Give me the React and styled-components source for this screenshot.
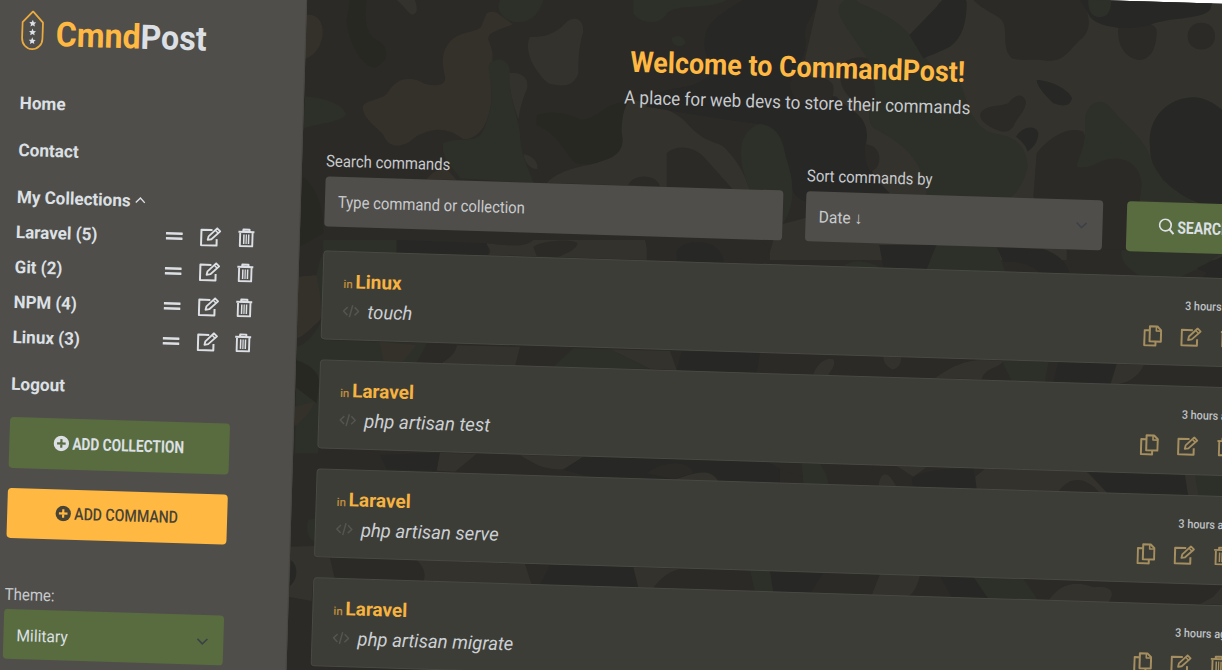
import React, { useLayoutEffect, useRef, useState } from "react";
import styled, { createGlobalStyle } from "styled-components";

const GlobalStyle = createGlobalStyle`
  * { box-sizing: border-box; }
  html, body { margin: 0; padding: 0; overflow: hidden; background: #fff; }
  body { font-family: Roboto, "Liberation Sans", sans-serif; color: #d9dde2; }
`;

const c = {
  panel: "#504e4a",
  card: "#3d3d37",
  cardLine: "#494944",
  green: "#596c40",
  amber: "#ffb942",
  text: "#dce0e5",
  soft: "#c8cbce",
  base: "#2c2a26",
  sand: "#34322c",
  moss: "#2d3029",
  ink: "#272726",
  rust: "#34302a",
};

const Stage = styled.div`
  width: 1222px;
  height: 670px;
  overflow: hidden;
`;

const Page = styled.div`
  position: relative;
  display: flex;
  width: 1324px;
  height: 780px;
  background: ${c.base};
  transform-origin: 0 0;
  transform: translate(-30px, -34.6px) rotate(1.76deg);
`;

const Backdrop = styled.svg`
  position: absolute;
  inset: 0;
  width: 1323px;
  height: 780px;
`;

const Sidebar = styled.aside`
  position: relative;
  flex: 0 0 338px;
  padding: 43px 0 0 53.7px;
  background: ${c.panel};
  border-right: 1px solid #484742;
`;

const Main = styled.main`
  position: relative;
  flex: 1;
  padding: 56px 22px 0 24px;
`;

const FitBox = styled.span`
  display: inline-block;
  flex: none;
  width: ${(p) => p.$w}px;
  white-space: nowrap;
`;
const FitInner = styled.span`
  display: inline-block;
  transform-origin: 0 50%;
`;

function Fit({ w, children }) {
  const ref = useRef(null);
  const [scale, setScale] = useState(1);
  useLayoutEffect(() => {
    if (ref.current) setScale(w / ref.current.offsetWidth);
  }, [w]);
  return (
    <FitBox $w={w}>
      <FitInner ref={ref} style={{ transform: `scaleX(${scale})` }}>{children}</FitInner>
    </FitBox>
  );
}

const Logo = styled.div`
  display: flex;
  height: 40px;
  margin: 0 0 35px -0.5px;
`;
const LogoName = styled.div`
  margin: 3px 0 0 11.5px;
  font-size: 34px;
  line-height: 40px;
  font-weight: 700;
  color: ${c.text};
  b { color: ${c.amber}; font-weight: 700; }
`;

const NavItem = styled.div`
  display: flex;
  align-items: center;
  height: 35px;
  margin-top: ${(p) => (p.$tight ? 0 : 12)}px;
  font-size: 17.5px;
  font-weight: 700;
  color: ${c.text};
  &:first-of-type { margin-top: 0; }
`;
const NavActions = styled.div`
  display: flex;
  align-items: center;
  margin: 0 44.5px 1px auto;
`;
const Caret = styled.svg`margin-left: 4px;`;

const Button = styled.button`
  display: flex;
  align-items: center;
  justify-content: center;
  gap: 3px;
  width: ${(p) => p.$w}px;
  height: ${(p) => p.$h || 50.5}px;
  padding: 0 0 1px 0;
  margin-top: ${(p) => p.$mt || 0}px;
  border: 0;
  border-radius: 4px;
  font: ${(p) => p.$weight || 700} 17px Roboto, sans-serif;
  color: ${(p) => (p.$amber ? "#494335" : c.text)};
  background: ${(p) => (p.$amber ? c.amber : c.green)};
`;

const Label = styled.label`
  display: block;
  height: 24px;
  line-height: 24px;
  margin: ${(p) => p.$mt || 0}px 0 ${(p) => p.$mb || 3.3}px;
  font-size: 16.5px;
  color: ${c.soft};
`;

const Control = styled.div`
  display: flex;
  align-items: center;
  justify-content: space-between;
  width: ${(p) => p.$w}px;
  height: 50px;
  padding: ${(p) => (p.$green ? 3 : 1)}px 15px 0 13px;
  border-radius: 4px;
  font-size: 16.5px;
  color: ${(p) => (p.$green ? c.text : c.soft)};
  background: ${(p) => (p.$green ? c.green : c.panel)};
`;

const Title = styled.h1`
  margin: 0 3px 0 0;
  height: 40px;
  line-height: 40px;
  text-align: center;
  font-size: 29px;
  font-weight: 700;
  color: ${c.amber};
`;
const Subtitle = styled.p`
  margin: 1px 2px 46px 0;
  height: 30px;
  line-height: 30px;
  text-align: center;
  font-size: 18.5px;
  color: ${c.soft};
`;
const Filters = styled.div`
  display: flex;
  align-items: flex-end;
  gap: 23.3px;
  margin-bottom: 24px;
`;
const Cards = styled.div`
  display: flex;
  flex-direction: column;
  gap: 20.7px;
`;
const Card = styled.article`
  display: flex;
  justify-content: space-between;
  width: 938px;
  height: 88.3px;
  padding: 14.5px 21px 0 20px;
  border: 1px solid ${c.cardLine};
  border-radius: 4px;
  background: ${c.card};
`;
const CardSide = styled.div`
  display: flex;
  flex-direction: column;
  align-items: ${(p) => (p.$end ? "flex-end" : "flex-start")};
`;
const CardRow = styled.div`
  display: flex;
  align-items: center;
  height: 29.5px;
`;
const Collection = styled(CardRow)`
  font-size: 19px;
  font-weight: 700;
  color: #f7b340;
  small { margin: 4px 3px 0 0; font-size: 11.5px; font-weight: 500; color: #bf8c3c; }
`;
const Command = styled(CardRow)`
  gap: 8px;
  font-size: 19px;
  font-style: italic;
  color: #ccd0d4;
`;
const Age = styled(CardRow)`
  height: 26px;
  margin-right: -3.5px;
  font-size: 12px;
  font-weight: 500;
  color: #bfc2c6;
`;
const Actions = styled(CardRow)`
  height: 37px;
  gap: 18px;
`;

const EditIcon = ({ color, ...r }) => (
  <svg width="22" height="20" viewBox="0 0 22 20" fill="none" stroke={color} strokeWidth="2" strokeLinejoin="round" {...r}>
    <path d="M12.5 3H1.5V18.5H17V12" />
    <path d="M8 13L8.8 9.5L17.2 1.2L20.3 4.2L11.7 12.3Z" strokeWidth="1.8" />
    <path d="M15.4 3.2L18.4 6.1" strokeWidth="1.5" />
  </svg>
);
const TrashIcon = ({ color, ...r }) => (
  <svg width="17" height="20" viewBox="0 0 17 20" fill="none" stroke={color} strokeWidth="1.9" {...r}>
    <path d="M.5 4H16.5M2.3 4V18.2H14.7V4M5.4 4V1.6H11.6V4" strokeLinejoin="round" />
    <path d="M6.1 6.5V16M10.9 6.5V16" strokeWidth="1.5" />
    <path d="M8.5 6.5V16" strokeWidth="1.2" />
  </svg>
);
const CopyIcon = ({ color }) => (
  <svg width="19" height="22" viewBox="0 0 19 22" fill="none" stroke={color} strokeWidth="2" strokeLinejoin="round">
    <path d="M6.5 1.5H14L17.8 5.2V16.5H6.5Z" />
    <path d="M13 1.5V6H17.8" strokeWidth="1.6" />
    <path d="M6.5 5.5H1.3V20.5H12.5V16.5" />
  </svg>
);
const EqualsIcon = () => (
  <svg width="17" height="9" viewBox="0 0 17 9" fill={c.text}>
    <rect y=".4" width="17" height="2.6" rx=".6" />
    <rect y="5.4" width="17" height="2.6" rx=".6" />
  </svg>
);
const PlusIcon = ({ color, hole }) => (
  <svg width="16" height="16" viewBox="0 0 16 16">
    <circle cx="8" cy="8" r="7.7" fill={color} />
    <path d="M8 3.7V12.3M3.7 8H12.3" stroke={hole} strokeWidth="2.2" />
  </svg>
);
const SearchIcon = () => (
  <svg width="16" height="17" viewBox="0 0 16 17" fill="none" stroke={c.text} strokeWidth="1.7">
    <circle cx="6.8" cy="6.8" r="5.8" />
    <path d="M11 11L15.2 15.6" strokeWidth="2.1" />
  </svg>
);
const Chevron = () => (
  <svg width="12" height="8" viewBox="0 0 12 8" fill="none" stroke="#3b4147" strokeWidth="1.6">
    <path d="M1 1L6 6L11 1" />
  </svg>
);
const star = "M0-3.6L1-1.2L3.5-1L1.7.7L2.2 3.1L0 1.8L-2.2 3.1L-1.7.7L-3.5-1L-1-1.2Z";
const Shield = () => (
  <svg width="23" height="40" viewBox="0 0 23 40">
    <path d="M11.5 1L21.7 12V28A10.2 10.8 0 0 1 1.3 28V12Z" fill="none" stroke="#e9aa40" strokeWidth="1.8" strokeLinejoin="round" />
    {[13, 21.8, 30.6].map((y) => (
      <path key={y} d={star} transform={`translate(11.5 ${y})`} fill={c.text} />
    ))}
  </svg>
);

const camo = [
  { x: 760, y: 0, shapes: [["sand", "M175 0H1386V780H0V690L340 600L130 200Z"]] },
  {
    x: 300, y: 0,
    shapes: [
      ["rust", "M20 45C50 40 70 65 68 100C66 140 45 165 15 178Z"],
      ["dark", "M150 0H200C190 80 205 110 240 125C270 150 265 185 225 203C180 200 140 110 140 60Z"],
      ["sand", "M290 0H345C355 30 350 45 335 44C320 35 315 20 290 0Z"],
      ["rust", "M560 40C590 25 600 50 640 72C600 90 560 95 565 120C590 170 570 200 575 260C580 330 555 420 490 418C430 370 370 390 330 425C290 445 265 440 250 405C230 380 180 350 190 315C210 295 250 300 265 275C290 235 330 225 370 250C400 260 440 260 435 230C425 190 425 150 450 125C480 90 540 100 545 75Z"],
      ["moss", "M600 0H730C720 40 690 70 650 66C610 65 585 30 600 0Z"],
      ["sand", "M690 110C740 115 780 90 800 65C830 45 850 60 850 95C835 140 835 190 835 220C820 265 780 260 745 250C700 210 670 150 690 110Z"],
      ["moss", "M570 190C600 165 630 185 630 220C625 290 650 330 660 400C660 470 690 510 700 550L480 535C470 510 420 480 430 430C470 410 530 430 545 400C585 320 575 270 565 200Z"],
      ["sand", "M628 220C670 215 690 240 680 270C665 300 660 330 655 358C640 310 628 280 628 220Z"],
      ["sand", "M670 463C700 465 715 490 712 507C690 507 675 490 670 463Z"],
      ["rust", "M380 538C400 510 430 500 445 512L470 540Z"],
      ["moss", "M15 290C60 290 130 310 138 342C130 365 60 370 10 385Z"],
      ["dark", "M8 530C50 560 70 620 70 700L0 740Z"],
      ["dark", "M710 345C760 330 800 340 840 358C890 360 900 320 960 308C1000 290 970 350 968 440C940 490 860 500 825 488C790 450 770 400 710 375Z"],
      ["sand", "M1000 300C1060 310 1130 330 1170 380C1230 440 1260 420 1280 450C1320 490 1340 540 1350 570L740 548C790 500 860 500 900 485C960 470 975 440 965 400C965 350 975 300 1000 300Z"],
      ["base", "M1100 460C1130 430 1190 440 1220 480L1300 570L1100 560Z"],
      ["base", "M985 555C1000 520 1070 520 1080 560Z"],
      ["ink", "M1330 0H1550C1560 30 1510 60 1515 110C1530 170 1470 210 1470 260C1500 330 1560 280 1610 290C1640 330 1710 340 1700 420C1690 470 1700 510 1770 580L1520 605C1440 590 1440 380 1380 372C1280 360 1100 330 1040 320C1040 260 1160 270 1190 250C1270 220 1200 170 1215 110C1220 70 1260 40 1330 0Z"],
      ["moss", "M1000 0H1280C1230 30 1130 10 1100 40C1080 80 1020 70 1000 40Z"],
      ["moss", "M1115 115C1130 100 1155 110 1157 130C1145 145 1115 140 1115 115Z"],
      ["moss", "M1380 372C1440 380 1450 430 1460 480C1490 560 1480 640 1440 680L1350 570C1310 480 1310 390 1380 372Z"],
    ],
  },
  {
    x: 760, y: 0,
    shapes: [
      ["moss", "M235 30C240 0 270-20 300 10C370 40 410 60 450 105C500 180 520 220 600 245C630 330 640 380 700 400C780 410 800 450 803 500C790 560 760 590 750 592L500 585C490 480 430 430 340 385C310 350 340 300 345 240C340 170 240 80 235 30Z"],
      ["base", "M240 200C260 170 320 165 325 180C340 230 350 260 345 320C300 320 230 290 240 200Z"],
      ["base", "M90 250C90 220 215 220 220 260C225 300 200 325 160 322C120 315 90 290 90 250Z"],
      ["base", "M314 432C345 435 360 455 358 480C355 500 345 512 330 514C315 490 314 460 314 432Z"],
      ["ink", "M530 20C560-30 620-20 620 10C620 80 600 120 570 140C530 160 500 170 490 175L448 105Z"],
      ["base", "M640 0H960C1000 50 990 100 960 120C920 160 910 185 860 182C820 175 790 185 755 175C720 140 750 80 720 55C700 40 670 30 640 0Z"],
      ["base", "M1075 85C1080 60 1185 60 1190 90C1190 150 1170 180 1135 180C1100 175 1070 140 1075 85Z"],
      ["ink", "M960 0H1360L1350 30C1320 60 1230 50 1170 75C1100 95 1010 80 990 50Z"],
      ["moss", "M985 0H1053C1055 35 1040 52 1018 52C995 50 982 30 985 0Z"],
      ["base", "M1283 108C1283 55 1365 55 1365 108C1365 162 1283 162 1283 108Z"],
      ["ink", "M830 240C870 240 930 270 936 295C930 320 910 320 880 310C860 290 830 260 830 240Z"],
      ["base", "M670 330C690 315 720 320 745 310C765 280 790 280 798 305C795 340 770 350 760 380C740 405 720 395 690 380C655 360 655 340 670 330Z"],
      ["ink", "M768 410C790 375 830 375 835 400C835 430 815 445 803 455C795 430 780 420 768 410Z"],
      ["base", "M830 460C860 420 920 375 970 395C1000 480 1010 480 1070 475C1130 480 1160 520 1145 560L1140 600L1160 780H920V750L820 590Z"],
      ["moss", "M975 350C985 310 1020 290 1050 320C1090 370 1160 420 1175 480C1200 550 1250 580 1310 610L1140 600C1160 520 1120 475 1060 475C1010 480 1000 510 950 500C960 460 980 440 975 350Z"],
      ["ink", "M1170 440C1160 350 1230 290 1305 292C1350 295 1386 330 1386 330V620C1330 620 1270 600 1210 540C1180 500 1170 480 1170 440Z"],
    ],
  },
  {
    x: 280, y: 240,
    shapes: [
      ["moss", "M130 0H350V45L130 35C120 60 105 100 110 140L125 240C100 300 60 320 50 320L45 640H115L125 362L440 368V310L125 300Z"],
      ["rust", "M55 110L110 105C120 150 130 230 120 240C90 270 60 295 50 295Z"],
      ["ink", "M350 0L620 10C630 30 625 45 620 45L350 40Z"],
      ["sand", "M620 10C700 20 740 20 760 0H1100V60L625 45C640 30 620 20 620 10Z"],
      ["base", "M760 20C790 0 880-5 893 10C890 30 850 45 830 52L770 48Z"],
      ["base", "M1095 0H1480C1470 40 1460 60 1465 72L1110 60Z"],
      ["ink", "M1190 35C1200-5 1320-10 1330 60V68L1190 64Z"],
      ["rust", "M298 305L410 315L370 365L310 362Z"],
      ["base", "M440 312L530 316C530 345 500 370 470 372L410 368Z"],
      ["sand", "M530 316L720 320L705 378L480 372C520 350 530 330 530 316Z"],
      ["moss", "M880 325L990 328L1110 386L820 382Z"],
      ["sand", "M990 328L1170 333L1190 390L1110 386Z"],
      ["ink", "M1205 334L1440 340L1430 398L1190 392Z"],
      ["dark", "M45 360C90 370 120 400 118 430L110 490L45 440Z"],
      ["rust", "M45 500L105 485C90 520 60 550 42 560Z"],
      ["ink", "M300 645L480 638L470 692L320 688Z"],
      ["sand", "M480 638L590 641L525 695L470 692Z"],
      ["sand", "M720 645L910 650L850 688C790 690 760 670 720 645Z"],
      ["ink", "M910 650L1500 666V730L950 715L850 690Z"],
      ["base", "M1100 700C1150 660 1230 660 1240 700L1180 718Z"],
      ["sand", "M1180 720C1240 700 1290 680 1315 724Z"],
      ["moss", "M85 840L110 835V908C85 900 75 870 85 840Z"],
      ["sand", "M30 920L105 918V952L150 955L165 1020L100 1015L95 1083L25 1070Z"],
      ["ink", "M32 960C55 975 55 1020 29 1038Z"],
      ["sand", "M410 960L735 972L755 1034L430 1024C440 1000 430 980 410 960Z"],
      ["ink", "M810 975L1060 982L1075 1042L780 1034Z"],
      ["sand", "M1060 982L1200 986C1150 1000 1130 1030 1120 1044L1075 1042Z"],
    ],
  },
  {
    x: 740, y: 240,
    shapes: [
      ["base", "M0 0H60C90 20 95 50 85 76L0 72Z"],
      ["moss", "M310 78C340 55 380 62 418 80V86Z"],
      ["ink", "M418 15H590L560 87L430 82Z"],
      ["moss", "M590 17L770 22L795 95L560 87Z"],
      ["ink", "M770 22L910 27C960 45 980 70 990 102L900 97C860 65 820 65 790 65Z"],
      ["base", "M985 28H1150L1200 107L1000 102Z"],
      ["moss", "M1145 30L1446 38L1380 85L1320 110L1200 107C1150 80 1140 50 1145 30Z"],
      ["ink", "M1446 50L1370 85L1400 98L1390 112L1446 114Z"],
      ["sand", "M220 404C230 370 260 350 280 358C290 375 270 395 265 406Z"],
      ["sand", "M430 350L483 352C485 380 465 390 455 387C440 380 430 365 430 350Z"],
      ["sand", "M585 414C640 375 680 360 730 360L790 362C780 385 735 380 725 418Z"],
      ["moss", "M785 360L925 366L915 426L815 423Z"],
      ["ink", "M955 366L1130 372L1115 432L940 427Z"],
      ["sand", "M1130 372L1212 374C1190 420 1150 435 1112 432Z"],
      ["base", "M90 668L185 672L190 710C150 700 120 690 90 668Z"],
      ["moss", "M185 670L240 672C260 700 265 720 265 736L190 732Z"],
      ["base", "M400 677L520 680L520 743L375 738Z"],
      ["sand", "M415 740C420 700 440 680 470 742Z"],
      ["sand", "M470 678L560 682L520 710Z"],
      ["ink", "M515 715C550 690 620 685 700 685L710 748L520 743Z"],
      ["sand", "M735 686L1040 695L1105 762L710 748L706 710Z"],
      ["base", "M955 755C990 705 1040 710 1080 760Z"],
      ["ink", "M1045 695L1335 704L1345 768L1105 762Z"],
      ["sand", "M1335 704H1446V770H1345Z"],
      ["moss", "M1365 706H1446V770L1375 768Z"],
      ["moss", "M30 990L90 993C110 1030 110 1050 100 1058L45 1056Z"],
      ["ink", "M90 993L250 998L210 1062L100 1058Z"],
      ["sand", "M420 1003L540 1006C530 1050 510 1070 500 1070L395 1066Z"],
      ["ink", "M600 1008L700 1010L745 1076L635 1072Z"],
      ["moss", "M700 1010L850 1016L895 1082L745 1076Z"],
      ["sand", "M925 1082C960 1030 1010 1020 1060 1042C1120 1035 1125 1060 1105 1088Z"],
      ["sand", "M1446 1040L1420 1070L1380 1092L1446 1094Z"],
    ],
  },
];

const Camouflage = () => (
  <Backdrop viewBox="0 0 1323 780">
    <g transform="rotate(-1.76) translate(30 34.6)">
      {camo.map((part, i) => (
        <g key={i} transform={`translate(${part.x} ${part.y}) scale(.33333)`}>
          {part.shapes.map(([tone, d]) => (
            <path key={d} d={d} fill={tone === "dark" ? "#282823" : c[tone]} />
          ))}
        </g>
      ))}
    </g>
  </Backdrop>
);

const collections = [
  ["Laravel (5)", 82],
  ["Git (2)", 47.5],
  ["NPM (4)", 63.5],
  ["Linux (3)", 67],
];
const commands = [
  ["Linux", 46, "touch", 44.5],
  ["Laravel", 62, "php artisan test", 126.5],
  ["Laravel", 62, "php artisan serve", 137.5],
  ["Laravel", 62, "php artisan migrate", 156],
];
const tan = "#a58e5f";

export default function App() {
  return (
    <Stage>
      <GlobalStyle />
      <Page>
        <Camouflage />
        <Sidebar>
          <Logo>
            <Shield />
            <LogoName><Fit w={151}><b>Cmnd</b>Post</Fit></LogoName>
          </Logo>
          <nav>
            <NavItem><Fit w={46}>Home</Fit></NavItem>
            <NavItem><Fit w={60}>Contact</Fit></NavItem>
            <NavItem>
              <Fit w={114}>My Collections</Fit>
              <Caret width="11" height="7" viewBox="0 0 11 7" fill="none" stroke={c.text} strokeWidth="1.4">
                <path d="M1 6L5.5 1.3L10 6" />
              </Caret>
            </NavItem>
            {collections.map(([name, w]) => (
              <NavItem key={name} $tight>
                <Fit w={w}>{name}</Fit>
                <NavActions>
                  <EqualsIcon />
                  <EditIcon color={c.text} style={{ margin: "0 16px 0 17px" }} />
                  <TrashIcon color={c.text} />
                </NavActions>
              </NavItem>
            ))}
            <NavItem><Fit w={54}>Logout</Fit></NavItem>
          </nav>
          <Button $w={220} $mt={15.5} $h={51}>
            <PlusIcon color={c.text} hole={c.green} />
            <Fit w={112}>ADD COLLECTION</Fit>
          </Button>
          <Button $w={220} $mt={20} $amber $weight={500}>
            <PlusIcon color="#494335" hole={c.amber} />
            <Fit w={104}>ADD COMMAND</Fit>
          </Button>
          <Label $mt={45} $mb={2.3}><Fit w={50}>Theme:</Fit></Label>
          <Control $w={220} $green>
            <Fit w={51}>Military</Fit>
            <Chevron />
          </Control>
        </Sidebar>
        <Main>
          <Title><Fit w={335}>Welcome to CommandPost!</Fit></Title>
          <Subtitle><Fit w={346}>A place for web devs to store their commands</Fit></Subtitle>
          <Filters>
            <div>
              <Label><Fit w={124.5}>Search commands</Fit></Label>
              <Control $w={458}><Fit w={187}>Type command or collection</Fit></Control>
            </div>
            <div>
              <Label><Fit w={126}>Sort commands by</Fit></Label>
              <Control $w={297}><Fit w={43.5}>Date ↓</Fit><Chevron /></Control>
            </div>
            <Button $w={136} $h={50}><SearchIcon /><Fit w={53}>SEARCH</Fit></Button>
          </Filters>
          <Cards>
            {commands.map(([group, gw, text, tw]) => (
              <Card key={text}>
                <CardSide>
                  <Collection><small><Fit w={9}>in</Fit></small><Fit w={gw}>{group}</Fit></Collection>
                  <Command>
                    <svg width="17" height="14" viewBox="0 0 17 14" fill="none" stroke="#55554f" strokeWidth="1.5">
                      <path d="M5 3L1 7L5 11M12 3L16 7L12 11M10 1L7 13" />
                    </svg>
                    <Fit w={tw}>{text}</Fit>
                  </Command>
                </CardSide>
                <CardSide $end>
                  <Age><Fit w={57}>3 hours ago</Fit></Age>
                  <Actions>
                    <CopyIcon color={tan} />
                    <EditIcon color={tan} />
                    <TrashIcon color={tan} />
                  </Actions>
                </CardSide>
              </Card>
            ))}
          </Cards>
        </Main>
      </Page>
    </Stage>
  );
}
